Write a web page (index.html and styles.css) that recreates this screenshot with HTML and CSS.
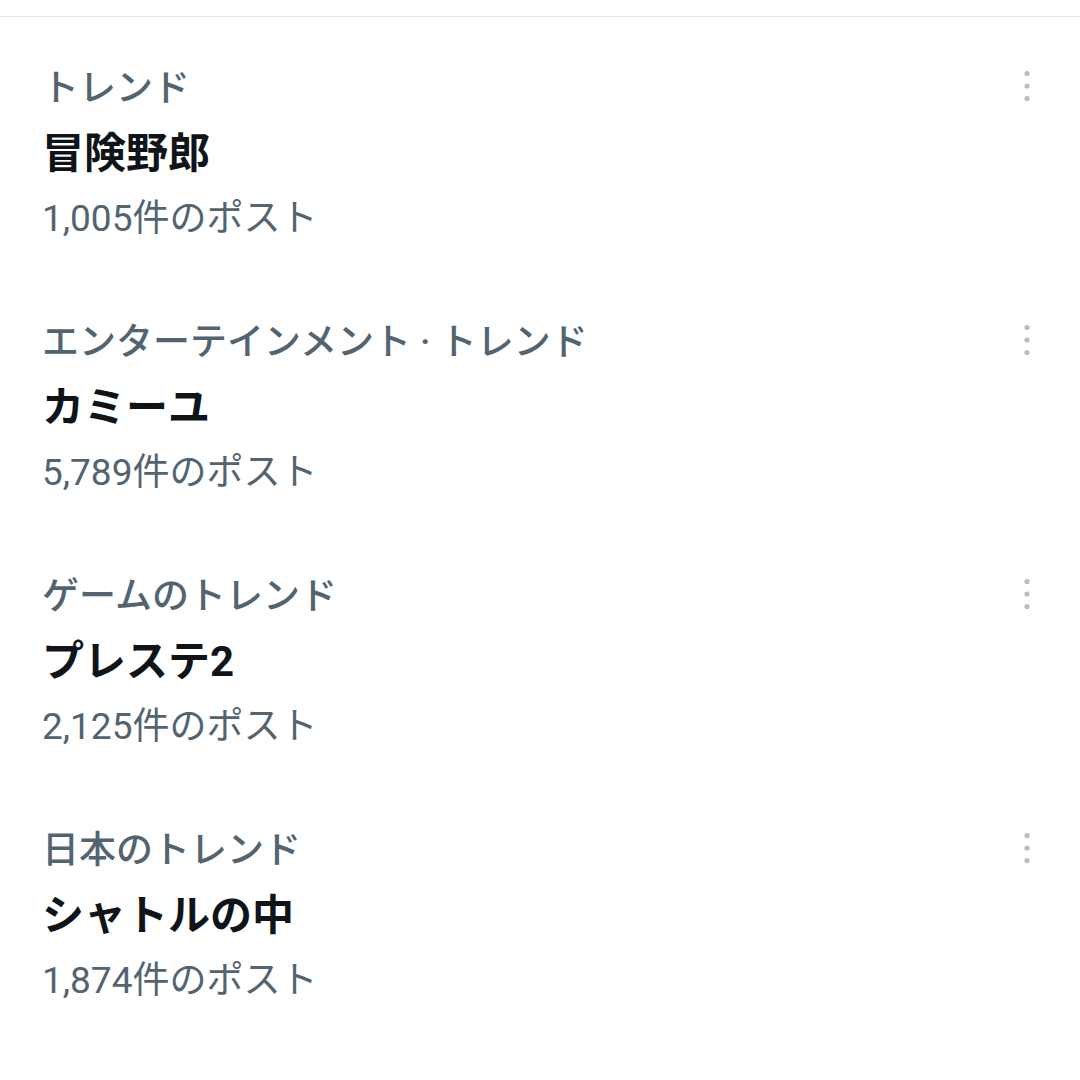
FILE: index.html
```html
<!DOCTYPE html>
<html lang="ja">
<head>
  <meta charset="UTF-8">
  <meta name="viewport" content="width=device-width, initial-scale=1.0">
  <title>トレンド</title>
  <link rel="stylesheet" href="styles.css">
</head>
<body>

<div class="trends">
  <div class="trend">
    <div class="trend-body">
      <div class="trend-category">トレンド</div>
      <div class="trend-title">冒険野郎</div>
      <div class="trend-count">1,005件のポスト</div>
    </div>
    <button class="more" aria-label="もっと見る">
      <svg viewBox="0 0 20 40" width="20" height="40"><circle cx="10" cy="7.5" r="2.6"/><circle cx="10" cy="20" r="2.6"/><circle cx="10" cy="32.5" r="2.6"/></svg>
    </button>
  </div>

  <div class="trend">
    <div class="trend-body">
      <div class="trend-category">エンターテインメント · トレンド</div>
      <div class="trend-title">カミーユ</div>
      <div class="trend-count">5,789件のポスト</div>
    </div>
    <button class="more" aria-label="もっと見る">
      <svg viewBox="0 0 20 40" width="20" height="40"><circle cx="10" cy="7.5" r="2.6"/><circle cx="10" cy="20" r="2.6"/><circle cx="10" cy="32.5" r="2.6"/></svg>
    </button>
  </div>

  <div class="trend">
    <div class="trend-body">
      <div class="trend-category">ゲームのトレンド</div>
      <div class="trend-title">プレステ2</div>
      <div class="trend-count">2,125件のポスト</div>
    </div>
    <button class="more" aria-label="もっと見る">
      <svg viewBox="0 0 20 40" width="20" height="40"><circle cx="10" cy="7.5" r="2.6"/><circle cx="10" cy="20" r="2.6"/><circle cx="10" cy="32.5" r="2.6"/></svg>
    </button>
  </div>

  <div class="trend">
    <div class="trend-body">
      <div class="trend-category">日本のトレンド</div>
      <div class="trend-title">シャトルの中</div>
      <div class="trend-count">1,874件のポスト</div>
    </div>
    <button class="more" aria-label="もっと見る">
      <svg viewBox="0 0 20 40" width="20" height="40"><circle cx="10" cy="7.5" r="2.6"/><circle cx="10" cy="20" r="2.6"/><circle cx="10" cy="32.5" r="2.6"/></svg>
    </button>
  </div>
</div>

</body>
</html>
```

FILE: styles.css
```css
* {
  box-sizing: border-box;
}

body {
  margin: 0;
  padding: 16px 0 0;
  background-color: #ffffff;
  font-family: Roboto, "Noto Sans CJK JP", sans-serif;
  color: #0f1419;
}

.trends {
  border-top: 1px solid #e1e5e9;
}

.trend {
  display: flex;
  align-items: flex-start;
  height: 254px;
  padding: 39px 33px 0 42px;
}

.trend-body {
  flex: 1;
}

.trend-category,
.trend-count {
  font-size: 37px;
  line-height: 65px;
  color: #536471;
}

.trend-category {
  font-weight: 500;
}

.trend-title {
  font-size: 42px;
  line-height: 65px;
  font-weight: bold;
  color: #0f1419;
}

.more {
  display: flex;
  align-items: center;
  justify-content: center;
  width: 40px;
  height: 65px;
  margin-top: -3px;
  padding: 0;
  border: none;
  background: none;
}

.more svg {
  fill: #b4bec7;
}
```
